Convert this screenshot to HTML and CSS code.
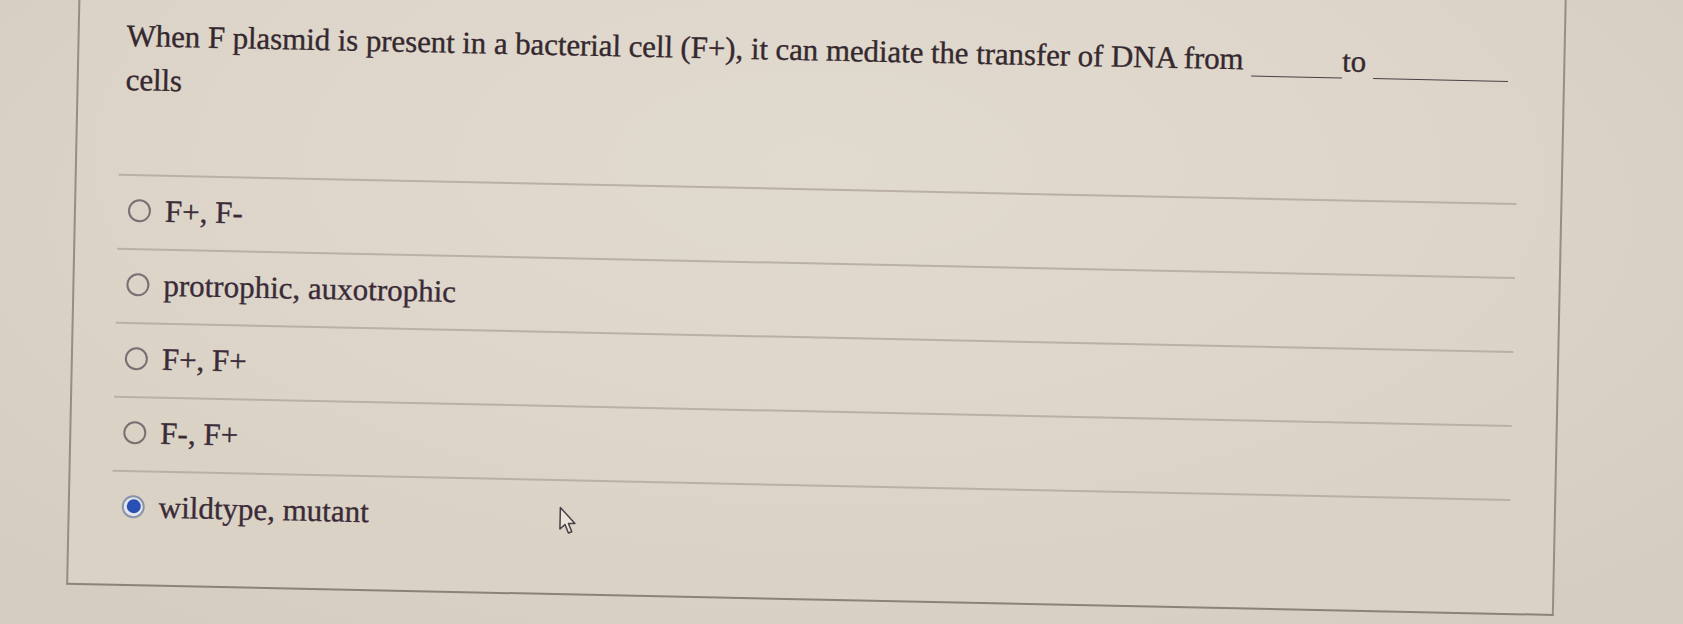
FILE: index.html
```html
<!DOCTYPE html>
<html>
<head>
<meta charset="utf-8">
<link rel="stylesheet" href="styles.css">
</head>
<body>
<div class="stage">
  <div class="card">
    <p class="question">When F plasmid is present in a bacterial cell (F+), it can mediate the transfer of DNA from <span class="blank b1"></span>to <span class="blank b2"></span> cells</p>
    <div class="options">
      <label class="option"><span class="radio"></span><span class="otext">F+, F-</span></label>
      <label class="option"><span class="radio"></span><span class="otext">protrophic, auxotrophic</span></label>
      <label class="option"><span class="radio"></span><span class="otext">F+, F+</span></label>
      <label class="option"><span class="radio"></span><span class="otext">F-, F+</span></label>
      <label class="option selected"><span class="radio"><span class="dot"></span></span><span class="otext">wildtype, mutant</span></label>
    </div>
    <svg class="cursor" width="21" height="29" viewBox="0 0 15 21" xmlns="http://www.w3.org/2000/svg">
      <path d="M1 1 L1 16.5 L4.6 13.2 L7.2 19.3 L9.6 18.3 L7.1 12.4 L11.8 12.4 Z" fill="#e9e3d9" stroke="#4a4148" stroke-width="1.1" stroke-linejoin="round"/>
    </svg>
  </div>
</div>
</body>
</html>
```
FILE: styles.css
```css
html, body {
  margin: 0;
  padding: 0;
}
body {
  width: 1683px;
  height: 624px;
  overflow: hidden;
  background: radial-gradient(ellipse 1100px 500px at 50% 35%, #ddd6c9 0%, #d9d2c5 70%, #d5cdc0 100%);
  font-family: "Liberation Serif", "Times New Roman", serif;
  color: #3b2b38;
}
.stage {
  width: 1683px;
  height: 624px;
  transform: rotate(1.2deg);
  transform-origin: 841px 312px;
}
.card {
  position: relative;
  box-sizing: border-box;
  margin-left: 72px;
  width: 1488px;
  height: 621px;
  transform: translateY(-20px);
  border: 2px solid #998c86;
  border-bottom-color: #8c8279;
  background: radial-gradient(ellipse 900px 420px at 50% 30%, #e1dace 0%, #ded6ca 60%, #dad2c5 100%);
  padding: 47px 0 0 47px;
}
.question {
  margin: 0;
  width: 1395px;
  font-size: 31px;
  line-height: 44px;
  letter-spacing: -0.1px;
  color: #35282f;
  -webkit-text-stroke: 0.35px #35282f;
}
.blank {
  display: inline-block;
  height: 0;
  border-bottom: 1.5px solid #4a4044;
  vertical-align: -7px;
  -webkit-text-stroke: 0;
}
.b1 { width: 91px; }
.b2 { width: 135px; }
.options {
  margin: 72px 0 0 -5px;
  width: 1398px;
}
.option {
  display: flex;
  align-items: center;
  gap: 14px;
  box-sizing: border-box;
  height: 74px;
  padding: 0 0 4px 10px;
  border-top: 2px solid #bab0a5;
  font-size: 31px;
  line-height: 1;
  color: #3b2b38;
}
.otext {
  -webkit-text-stroke: 0.35px #3b2b38;
}
.radio {
  box-sizing: border-box;
  width: 23px;
  height: 23px;
  border-radius: 50%;
  border: 2.5px solid #7b6f73;
  display: flex;
  align-items: center;
  justify-content: center;
  flex: none;
}
.selected .radio {
  border: 2.5px solid #8a92aa;
  background: #e4e6ec;
}
.dot {
  width: 14px;
  height: 14px;
  border-radius: 50%;
  background: #2951b3;
}
.cursor {
  position: absolute;
  left: 489px;
  top: 530px;
}
```
